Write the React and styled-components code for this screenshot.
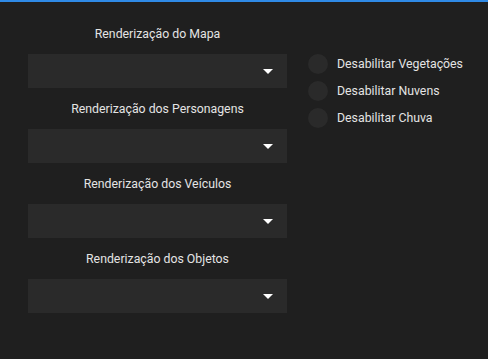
import styled, { createGlobalStyle } from "styled-components";

const Global = createGlobalStyle`
  html, body {
    margin: 0;
    padding: 0;
    background: #1f1f1f;
  }
  body {
    font-family: Roboto, "Liberation Sans", sans-serif;
  }
`;

const Panel = styled.div`
  box-sizing: border-box;
  width: 488px;
  height: 359px;
  background: #1f1f1f;
  border-top: 2px solid #2f8ae6;
  padding: 25px 0 0 28px;
  display: flex;
  gap: 21px;
`;

const Column = styled.div`
  width: 259px;
  display: flex;
  flex-direction: column;
  gap: 14px;
`;

const Group = styled.div`
  display: flex;
  flex-direction: column;
  gap: 12px;
`;

const Label = styled.div`
  color: #e4e4e4;
  font-size: 12.3px;
  line-height: 15px;
  text-align: center;
`;

const Select = styled.div`
  height: 34px;
  background: #2a2a2a;
  display: flex;
  align-items: center;
  justify-content: flex-end;
  padding-right: 14px;
`;

const Arrow = styled.span`
  width: 0;
  height: 0;
  border-left: 5px solid transparent;
  border-right: 5px solid transparent;
  border-top: 5px solid #ffffff;
`;

const Options = styled.div`
  padding-top: 27px;
  display: flex;
  flex-direction: column;
  gap: 7px;
`;

const Option = styled.div`
  display: flex;
  align-items: center;
  gap: 9px;
  color: #e4e4e4;
  font-size: 12.3px;
`;

const Radio = styled.span`
  width: 20px;
  height: 20px;
  border-radius: 50%;
  background: #2a2a2a;
`;

const selects = [
  "Renderização do Mapa",
  "Renderização dos Personagens",
  "Renderização dos Veículos",
  "Renderização dos Objetos",
];

const toggles = [
  "Desabilitar Vegetações",
  "Desabilitar Nuvens",
  "Desabilitar Chuva",
];

export default function App() {
  return (
    <>
      <Global />
      <Panel>
        <Column>
          {selects.map((s) => (
            <Group key={s}>
              <Label>{s}</Label>
              <Select>
                <Arrow />
              </Select>
            </Group>
          ))}
        </Column>
        <Options>
          {toggles.map((t) => (
            <Option key={t}>
              <Radio />
              {t}
            </Option>
          ))}
        </Options>
      </Panel>
    </>
  );
}
